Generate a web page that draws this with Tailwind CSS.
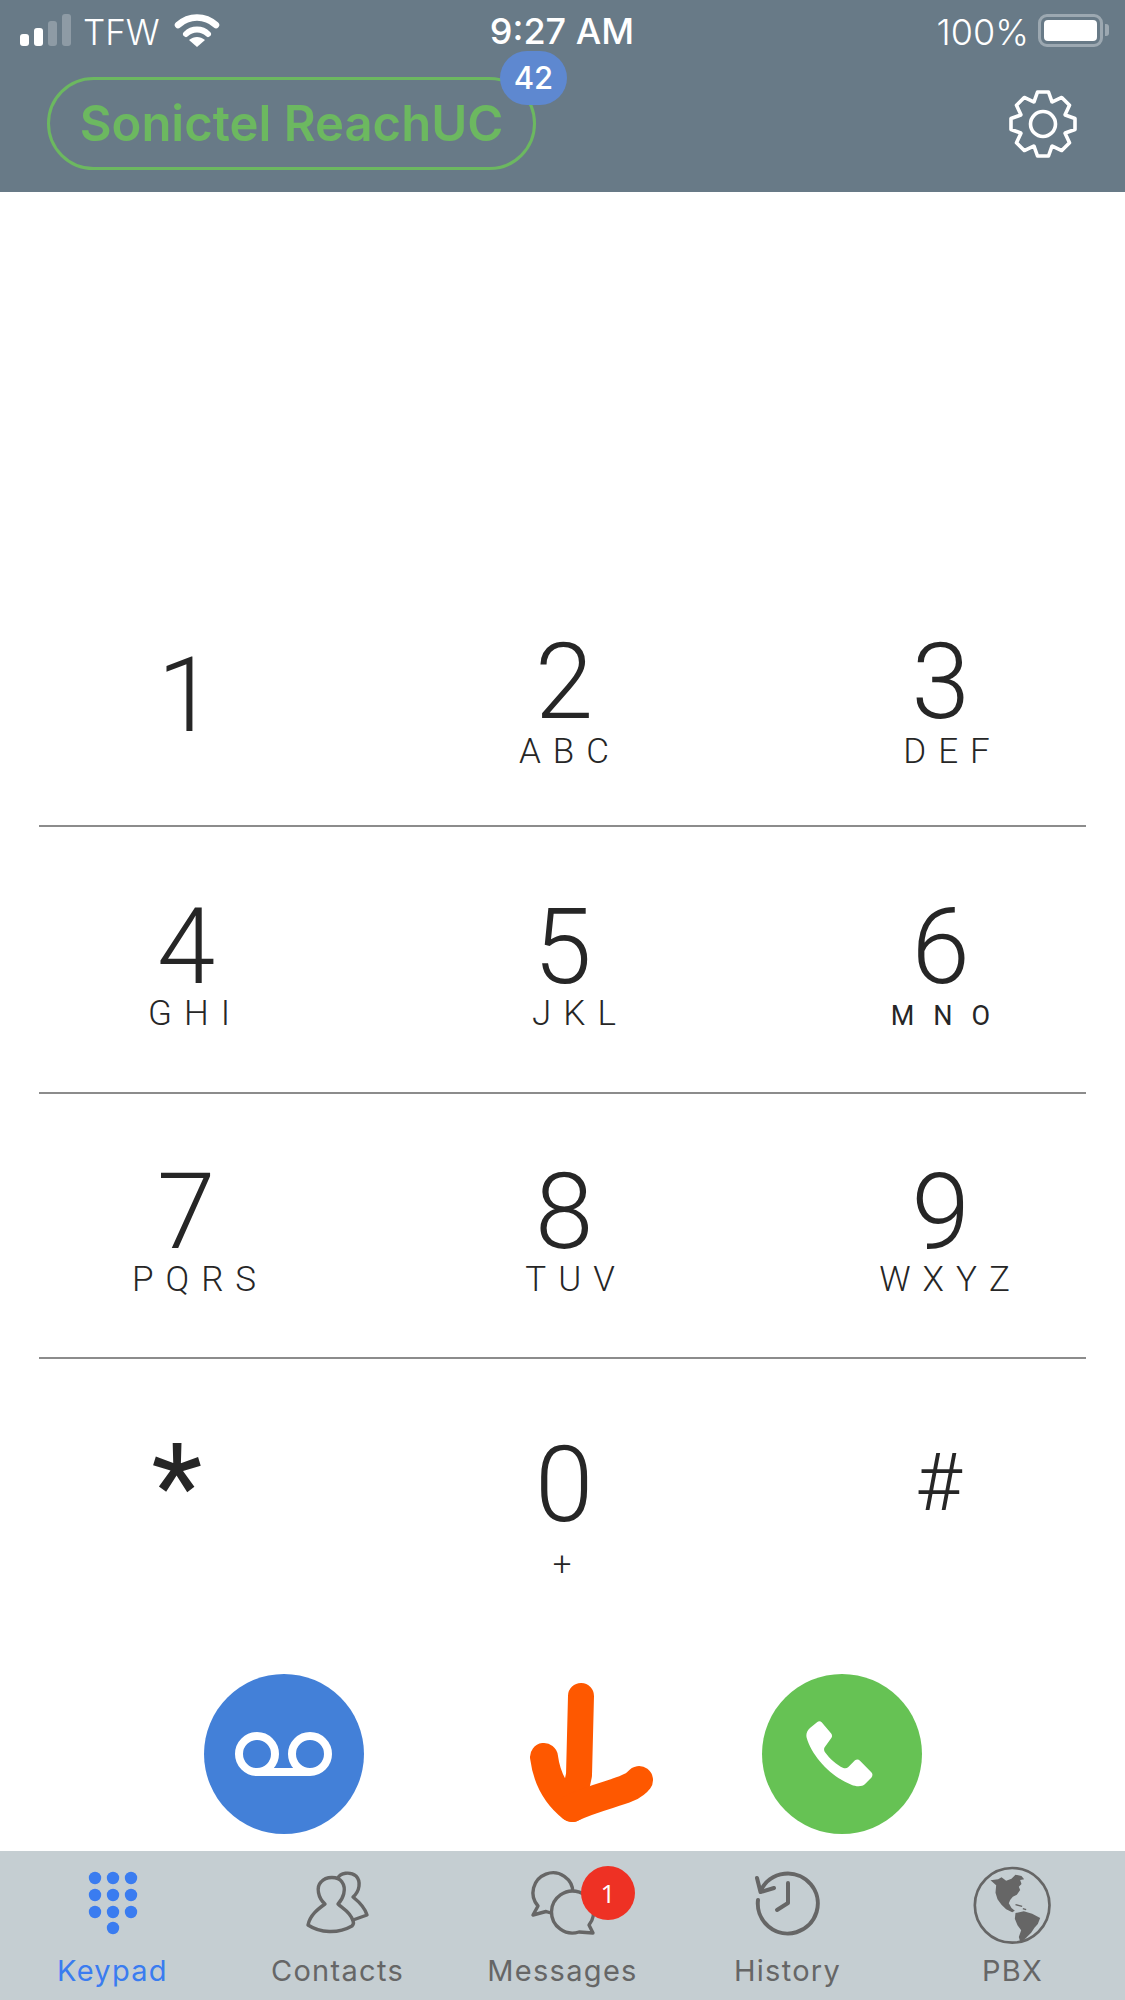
<!DOCTYPE html>
<html lang="en">
<head>
  <meta charset="UTF-8">
  <meta name="viewport" content="width=device-width, initial-scale=1.0">
  <title>Sonictel ReachUC Keypad</title>
  <script src="https://cdn.jsdelivr.net/npm/@tailwindcss/browser@4"></script>
</head>
<body class="bg-white">
  <div class="relative w-[1125px] h-[2000px] overflow-hidden flex flex-col font-['Inter',sans-serif]">

    <!-- Header -->
    <header class="h-[192px] bg-[#687a87] text-white shrink-0 relative">
      <div class="flex items-start justify-between h-[52px] pl-[20px] pr-[16px] pt-[12px]">
        <div class="flex items-center w-[300px] h-[36px]">
          <div class="flex items-end gap-[5px] h-[32px] pt-0">
            <span class="w-[9px] h-[12px] rounded-[3px] bg-white"></span>
            <span class="w-[9px] h-[18px] rounded-[3px] bg-white"></span>
            <span class="w-[9px] h-[25px] rounded-[3px] bg-white/25"></span>
            <span class="w-[9px] h-[32px] rounded-[3px] bg-white/25"></span>
          </div>
          <span class="ml-[12px] pt-[4px] text-[35px] leading-[38px] font-light">TFW</span>
          <svg class="ml-[14px]" width="46" height="36" viewBox="0 0 46 36">
            <path d="M4 13 C15 3 31 3 42 13" fill="none" stroke="#fff" stroke-width="6.5" stroke-linecap="round"/>
            <path d="M12 22 C18 16 28 16 34 22" fill="none" stroke="#fff" stroke-width="6" stroke-linecap="round"/>
            <path d="M15 28 C20 24 26 24 31 28 L23 35 Z" fill="#fff"/>
          </svg>
        </div>
        <span class="pr-[5px] text-[36px] leading-[38px] font-medium">9:27 AM</span>
        <div class="flex items-center justify-end w-[300px] h-[36px]">
          <span class="pt-[4px] text-[36px] leading-[38px] font-light">100%</span>
          <div class="ml-[9px] w-[65px] h-[33px] rounded-[9px] border-[3px] border-white/35 p-[3px]">
            <div class="w-full h-full bg-white rounded-[4px]"></div>
          </div>
          <span class="ml-[2px] w-[4px] h-[12px] bg-white/35 rounded-r-[3px]"></span>
        </div>
      </div>
      <div class="flex items-start justify-between pl-[47px] pr-[46px] pt-[25px]">
        <div class="relative w-[489px] h-[93px] rounded-full border-[3px] border-[#6cb860] flex items-center justify-center">
          <span class="text-[49px] font-semibold text-[#6cb860] leading-none">Sonictel ReachUC</span>
          <span class="absolute left-[450px] top-[-29px] w-[67px] h-[54px] rounded-full bg-[#5e88d0] text-white text-[31px] font-medium flex items-center justify-center">42</span>
        </div>
        <svg class="mt-[11px]" width="72" height="72" viewBox="-36 -36 72 72">
          <path d="M22.2 -9 L32 -5.5 L32 5.5 L22.2 9 L22.06 9.33 L26.52 18.74 L18.74 26.52 L9.33 22.06 L9 22.2 L5.5 32 L-5.5 32 L-9 22.2 L-9.33 22.06 L-18.74 26.52 L-26.52 18.74 L-22.06 9.33 L-22.2 9 L-32 5.5 L-32 -5.5 L-22.2 -9 L-22.06 -9.33 L-26.52 -18.74 L-18.74 -26.52 L-9.33 -22.06 L-9 -22.2 L-5.5 -32 L5.5 -32 L9 -22.2 L9.33 -22.06 L18.74 -26.52 L26.52 -18.74 L22.06 -9.33 Z" fill="none" stroke="#fff" stroke-width="3.6" stroke-linejoin="round"/>
          <circle r="12.5" fill="none" stroke="#fff" stroke-width="3.6"/>
        </svg>
      </div>
    </header>

    <!-- Number display area -->
    <div class="h-[368px] shrink-0"></div>

    <!-- Keypad -->
    <div class="text-[#262626] font-['Roboto',sans-serif] font-light shrink-0">
      <div class="grid grid-cols-[372px_384px_369px] h-[265px]">
        <div class="flex flex-col items-center pt-[81px]"><span class="text-[103px] leading-[110px]">1</span></div>
        <div class="flex flex-col items-center pt-[76px]"><span class="text-[105px] leading-[94px]">2</span><span class="text-[35px] leading-[36px] tracking-[12px] pl-[12px] mt-[4px]">ABC</span></div>
        <div class="flex flex-col items-center pt-[76px]"><span class="text-[105px] leading-[94px]">3</span><span class="text-[35px] leading-[36px] tracking-[12px] pl-[24px] mt-[4px]">DEF</span></div>
      </div>
      <div class="mx-[39px] h-[2px] bg-[#8c8c8c]"></div>
      <div class="grid grid-cols-[372px_384px_369px] h-[265px]">
        <div class="flex flex-col items-center pt-[74px]"><span class="text-[105px] leading-[94px]">4</span><span class="text-[35px] leading-[36px] tracking-[12px] pl-[18px] mt-[1px]">GHI</span></div>
        <div class="flex flex-col items-center pt-[74px]"><span class="text-[105px] leading-[94px] pr-[3px]">5</span><span class="text-[35px] leading-[36px] tracking-[12px] pl-[32px] mt-[1px]">JKL</span></div>
        <div class="flex flex-col items-center pt-[74px]"><span class="text-[105px] leading-[94px]">6</span><span class="text-[27px] leading-[36px] tracking-[19px] pl-[19px] mt-[3px] font-normal">MNO</span></div>
      </div>
      <div class="mx-[39px] h-[2px] bg-[#8c8c8c]"></div>
      <div class="grid grid-cols-[372px_384px_369px] h-[263px]">
        <div class="flex flex-col items-center pt-[72px]"><span class="text-[105px] leading-[94px]">7</span><span class="text-[35px] leading-[36px] tracking-[12px] pl-[28px] mt-[2px]">PQRS</span></div>
        <div class="flex flex-col items-center pt-[72px]"><span class="text-[105px] leading-[94px]">8</span><span class="text-[35px] leading-[36px] tracking-[12px] pl-[24px] mt-[2px]">TUV</span></div>
        <div class="flex flex-col items-center pt-[72px]"><span class="text-[105px] leading-[94px]">9</span><span class="text-[35px] leading-[36px] tracking-[12px] pl-[20px] mt-[2px]">WXYZ</span></div>
      </div>
      <div class="mx-[39px] h-[2px] bg-[#8c8c8c]"></div>
      <div class="grid grid-cols-[372px_384px_369px] h-[315px]">
        <div class="flex flex-col items-center pt-[74px] pr-[18px]"><span class="text-[118px] leading-[110px] font-normal">*</span></div>
        <div class="flex flex-col items-center pt-[80px]"><span class="text-[105px] leading-[94px]">0</span><span class="text-[33px] leading-[36px] mt-[13px] pr-[4px]">+</span></div>
        <div class="flex flex-col items-center pt-[69px] pr-[4px]"><span class="text-[80px] leading-[110px]">#</span></div>
      </div>
    </div>

    <!-- Call actions (row starts at 1674, overlaps the last key row's box) -->
    <div class="flex justify-center gap-[398px] h-[177px] mt-[-315px] relative shrink-0 translate-y-[315px]">
      <button class="w-[160px] h-[160px] rounded-full bg-[#4380d8] flex items-center justify-center">
        <svg width="160" height="160" viewBox="0 0 160 160">
          <circle cx="53" cy="80" r="18" fill="none" stroke="#fff" stroke-width="8"/>
          <circle cx="106" cy="80" r="18" fill="none" stroke="#fff" stroke-width="8"/>
          <path d="M53 98 H106" stroke="#fff" stroke-width="8"/>
        </svg>
      </button>
      <button class="w-[160px] h-[160px] rounded-full bg-[#66c254] flex items-center justify-center">
        <svg class="ml-[-3px] mt-[-3px]" width="105" height="105" viewBox="0 0 315 315">
          <path d="M88 66 C92 62 98 63 101 67 L129 100 C133 105 133 110 130 114 L110 142 C107 147 108 152 111 157 C125 176 145 195 166 204 C172 206 177 205 181 201 L201 181 C206 177 212 178 216 182 L250 217 C255 222 254 228 250 233 L232 251 C222 261 205 260 190 254 C130 230 72 170 56 113 C53 100 58 92 66 84 Z" fill="#fff"/>
        </svg>
      </button>
    </div>

    <!-- Hand-drawn arrow annotation -->
    <svg class="absolute left-[520px] top-[1675px]" width="140" height="155" viewBox="0 0 140 155" fill="none" stroke="#fe5800" stroke-linecap="round" stroke-linejoin="round">
      <path d="M61 21 L59 100 L52 133" stroke-width="26"/>
      <path d="M24 82 C27 105 38 122 52 133" stroke-width="28"/>
      <path d="M119 105 C110 117 85 118 52 133" stroke-width="28"/>
    </svg>

    <!-- Tab bar -->
    <nav class="mt-auto h-[149px] bg-[#c5ced2] grid grid-cols-5 text-[#666] text-[29px] tracking-[1.3px] leading-[30px] shrink-0">
      <a class="relative flex flex-col items-center pt-[14px] text-[#3a7cf0]">
        <svg width="100" height="90" viewBox="0 0 100 90" fill="#3a7cf0">
          <circle cx="32" cy="13" r="6.2"/><circle cx="50" cy="13" r="6.2"/><circle cx="68" cy="13" r="6.2"/>
          <circle cx="32" cy="30" r="6.2"/><circle cx="50" cy="30" r="6.2"/><circle cx="68" cy="30" r="6.2"/>
          <circle cx="32" cy="47" r="6.2"/><circle cx="50" cy="47" r="6.2"/><circle cx="68" cy="47" r="6.2"/>
          <circle cx="50" cy="63" r="6.2"/>
        </svg>
        <span class="mt-[1px]">Keypad</span>
      </a>
      <a class="relative flex flex-col items-center pt-[14px]">
        <svg width="100" height="90" viewBox="0 0 100 90" fill="none" stroke="#666" stroke-width="3.4" stroke-linejoin="round" stroke-linecap="round">
          <path d="M37 39 C30 33 28 22 33 17 C38 11 50 11 54 17 C59 24 55 34 50 39 C54 43 63 47 65 56 C66 58 65 60 64 61 C50 69 32 68 20 60 C22 50 30 44 37 39 Z"/>
          <path d="M50 13 C52 8 62 6 68 11 C73 16 72 26 65 32 C70 36 77 43 79 50 L65 55"/>
        </svg>
        <span class="mt-[1px]">Contacts</span>
      </a>
      <a class="relative flex flex-col items-center pt-[14px]">
        <svg width="100" height="90" viewBox="0 0 100 90" fill="none" stroke="#666" stroke-width="3.4" stroke-linejoin="round">
          <path d="M25 41 L20 50 L33 46.5 A20 20 0 1 0 25 41 Z"/>
          <path d="M66 67 L80 68 L76 60 A21 21 0 1 0 66 67 Z" fill="#c5ced2"/>
        </svg>
        <span class="mt-[1px]">Messages</span>
        <span class="absolute left-[131px] top-[15px] w-[54px] h-[54px] rounded-full bg-[#ee3124] text-white text-[26px] tracking-normal font-['Open_Sans',sans-serif] flex items-center justify-center">1</span>
      </a>
      <a class="relative flex flex-col items-center pt-[14px]">
        <svg width="100" height="90" viewBox="0 0 100 90" fill="none" stroke="#666" stroke-width="4" stroke-linecap="round" stroke-linejoin="round">
          <path d="M20 35 A30 30 0 1 0 23 25"/>
          <path d="M19 13 L22.5 27 L36 23"/>
          <path d="M50 18 V38 L39 45"/>
        </svg>
        <span class="mt-[1px]">History</span>
      </a>
      <a class="relative flex flex-col items-center pt-[14px]">
        <svg width="100" height="90" viewBox="0 0 100 90">
          <g transform="translate(2.5 -3) scale(0.3333)">
            <circle cx="140" cy="130" r="112" fill="none" stroke="#666" stroke-width="8"/>
            <path d="M75 55 L98 52 L108 46 L122 56 L138 50 L150 38 L168 42 L176 52 L164 54 L168 66 L160 74 L164 84 L154 98 L142 104 L134 114 L130 124 L138 138 L148 146 L140 151 L122 142 L108 128 L96 112 L90 92 L92 70 Z" fill="#666"/>
            <path d="M150 153 L175 148 L200 155 L224 168 L217 186 L207 197 L197 212 L182 227 L165 242 L160 225 L167 205 L156 190 L148 170 Z" fill="#666"/>
            <path d="M150 128 L170 133 M172 140 L182 143" stroke="#666" stroke-width="4" fill="none"/>
          </g>
        </svg>
        <span class="mt-[1px]">PBX</span>
      </a>
    </nav>
  </div>
</body>
</html>
